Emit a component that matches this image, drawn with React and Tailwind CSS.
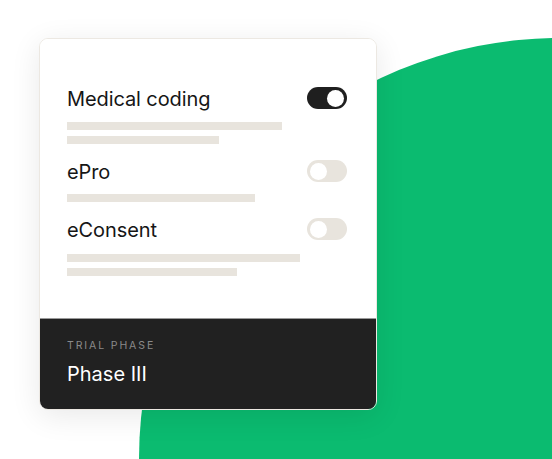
import React from 'react';

const features = [
  { name: 'Medical coding', on: true, bars: [215, 152] },
  { name: 'ePro', on: false, bars: [188] },
  { name: 'eConsent', on: false, bars: [233, 170] },
];

function Toggle({ on }) {
  return (
    <div
      className={
        'w-[40px] h-[22px] rounded-full flex items-center px-[3px] ' +
        (on ? 'bg-[#1f1f1f] justify-end' : 'bg-[#e8e4dd] justify-start')
      }
    >
      <div className="w-[17px] h-[17px] rounded-full bg-white" />
    </div>
  );
}

export default function App() {
  return (
    <div className="relative w-[552px] h-[459px] overflow-hidden bg-white font-['Inter',sans-serif]">
      {/* green backdrop circle */}
      <div className="absolute left-[139px] top-[38px] w-[842px] h-[842px] rounded-full bg-[#0bbb70]" />

      <div className="relative ml-[39px] mt-[38px] w-[338px] rounded-[9px] overflow-hidden border border-[#ece8e2] shadow-[0_6px_30px_rgba(0,0,0,0.09)]">
        <div className="bg-white pl-[27px] pr-[29px] pt-[48px] pb-[42px] border-b border-[#9a9a9a]">
          {features.map((f, i) => (
            <div key={f.name} className={i === 0 ? '' : 'mt-[16px]'}>
              <div className="flex items-center justify-between h-[22px]">
                <span className="text-[20px] text-[#161616] tracking-[-0.1px] pt-[2px]">
                  {f.name}
                </span>
                <Toggle on={f.on} />
              </div>
              <div className={i === 0 ? 'mt-[13px]' : i === 1 ? 'mt-[12px]' : 'mt-[14px]'}>
                {f.bars.map((w, j) => (
                  <div
                    key={j}
                    className={'h-[8px] bg-[#e8e4dd] ' + (j > 0 ? 'mt-[6px]' : '')}
                    style={{ width: w }}
                  />
                ))}
              </div>
            </div>
          ))}
        </div>
        <div className="bg-[#212121] h-[90px] pl-[27px] pt-[22px]">
          <div className="text-[10.5px] tracking-[0.18em] text-[#8a8a8a] leading-none">TRIAL PHASE</div>
          <div className="mt-[12px] text-[20px] text-white leading-none">Phase III</div>
        </div>
      </div>
    </div>
  );
}
